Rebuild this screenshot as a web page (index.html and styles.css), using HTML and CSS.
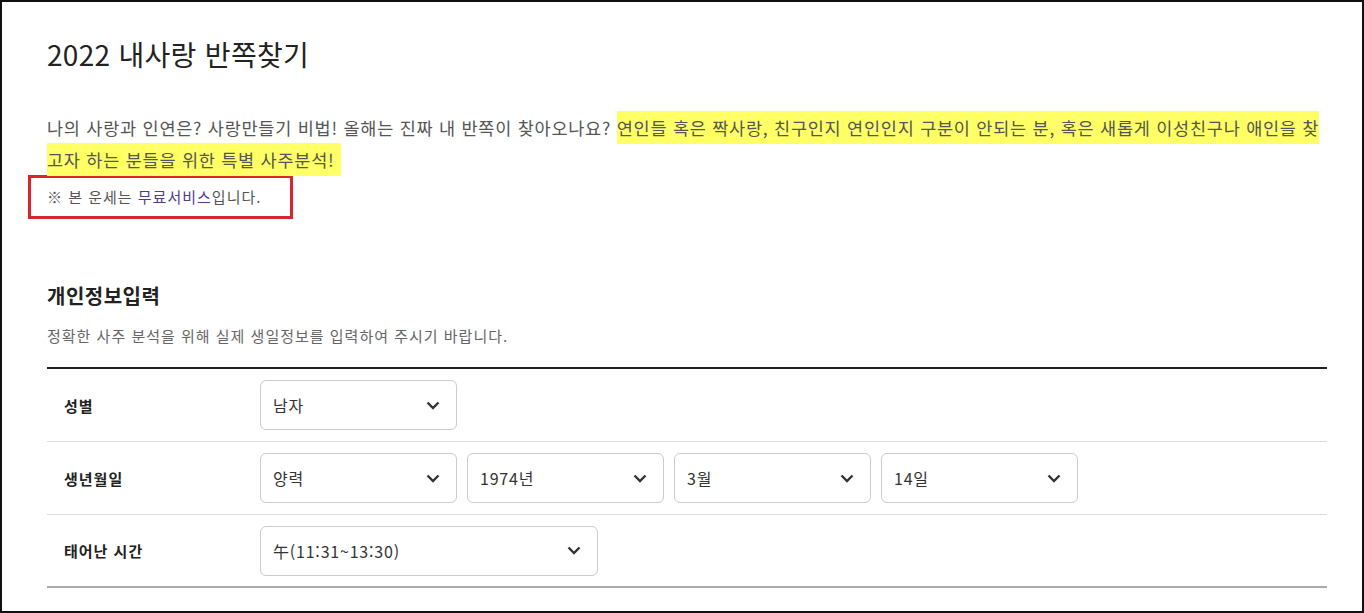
FILE: index.html
```html
<!DOCTYPE html>
<html lang="ko">
<head>
<meta charset="utf-8">
<title>2022 내사랑 반쪽찾기</title>
<link rel="stylesheet" href="styles.css">
</head>
<body>
<div class="page">
  <h1 class="title">2022 내사랑 반쪽찾기</h1>
  <p class="intro">나의 사랑과 인연은? 사랑만들기 비법! 올해는 진짜 내 반쪽이 찾아오나요? <span class="mark">연인들 혹은 짝사랑, 친구인지 연인인지 구분이 안되는 분, 혹은 새롭게 이성친구나 애인을 찾고자 하는 분들을 위한 특별 사주분석!</span></p>
  <div class="notice">※ 본 운세는 <span class="free">무료서비스</span>입니다.</div>

  <h2 class="section-title">개인정보입력</h2>
  <p class="section-desc">정확한 사주 분석을 위해 실제 생일정보를 입력하여 주시기 바랍니다.</p>

  <div class="form">
    <div class="row">
      <div class="label">성별</div>
      <div class="fields">
        <div class="select"><span>남자</span><svg class="chev" width="14" height="9" viewBox="0 0 14 9"><path d="M1.5 1.5 L7 7 L12.5 1.5"/></svg></div>
      </div>
    </div>
    <div class="row">
      <div class="label">생년월일</div>
      <div class="fields">
        <div class="select"><span>양력</span><svg class="chev" width="14" height="9" viewBox="0 0 14 9"><path d="M1.5 1.5 L7 7 L12.5 1.5"/></svg></div>
        <div class="select"><span>1974년</span><svg class="chev" width="14" height="9" viewBox="0 0 14 9"><path d="M1.5 1.5 L7 7 L12.5 1.5"/></svg></div>
        <div class="select"><span>3월</span><svg class="chev" width="14" height="9" viewBox="0 0 14 9"><path d="M1.5 1.5 L7 7 L12.5 1.5"/></svg></div>
        <div class="select"><span>14일</span><svg class="chev" width="14" height="9" viewBox="0 0 14 9"><path d="M1.5 1.5 L7 7 L12.5 1.5"/></svg></div>
      </div>
    </div>
    <div class="row last">
      <div class="label">태어난 시간</div>
      <div class="fields">
        <div class="select wide"><span>午(11:31~13:30)</span><svg class="chev" width="14" height="9" viewBox="0 0 14 9"><path d="M1.5 1.5 L7 7 L12.5 1.5"/></svg></div>
      </div>
    </div>
  </div>
</div>
</body>
</html>
```

FILE: styles.css
```css
* { box-sizing: border-box; }
html, body { margin: 0; padding: 0; background: #fff; }
body {
  font-family: "Noto Sans CJK KR", "Noto Sans", sans-serif;
  color: #333;
}
.page {
  height: 613px;
  border: 2px solid #111;
  padding: 0 35px 0 45px;
  overflow: hidden;
}
.title {
  margin: 34px 0 0;
  font-size: 28px;
  line-height: 36px;
  font-weight: 400;
  color: #222;
  letter-spacing: 0.3px;
}
.intro {
  margin: 40px 0 0;
  font-size: 17.5px;
  line-height: 32px;
  letter-spacing: 0.75px;
  color: #555;
}
.mark {
  background: #ffff66;
  padding: 4px 7px 4px 0;
}
.notice {
  margin: -1px 0 0 -19px;
  width: fit-content;
  border: 3px solid #d8262c;
  padding: 8px 29px 8px 16px;
  font-size: 15px;
  line-height: 22px;
  letter-spacing: 1px;
  color: #555;
}
.free { color: #503b8e; }
.section-title {
  margin: 64px 0 0;
  font-size: 20px;
  line-height: 26px;
  font-weight: 700;
  letter-spacing: 0.5px;
  color: #222;
}
.section-desc {
  margin: 16px 0 0;
  font-size: 15px;
  line-height: 22px;
  letter-spacing: 1px;
  color: #666;
}
.form {
  margin-top: 20px;
  border-top: 2px solid #222;
}
.row {
  display: grid;
  grid-template-columns: 213px 1fr;
  align-items: center;
  height: 73px;
  border-bottom: 1px solid #ddd;
}
.row.last { border-bottom: 2px solid #aaa; }
.label {
  padding-left: 17px;
  font-size: 15px;
  font-weight: 700;
  letter-spacing: 1px;
  color: #222;
}
.fields {
  display: flex;
  gap: 10px;
}
.select {
  width: 197px;
  height: 50px;
  border: 1px solid #ccc;
  border-radius: 6px;
  padding: 0 16px 0 12px;
  display: flex;
  align-items: center;
  justify-content: space-between;
  font-size: 16px;
  letter-spacing: 0.8px;
  color: #333;
}
.select.wide { width: 338px; }
.chev path {
  fill: none;
  stroke: #333;
  stroke-width: 2.4;
}
```
